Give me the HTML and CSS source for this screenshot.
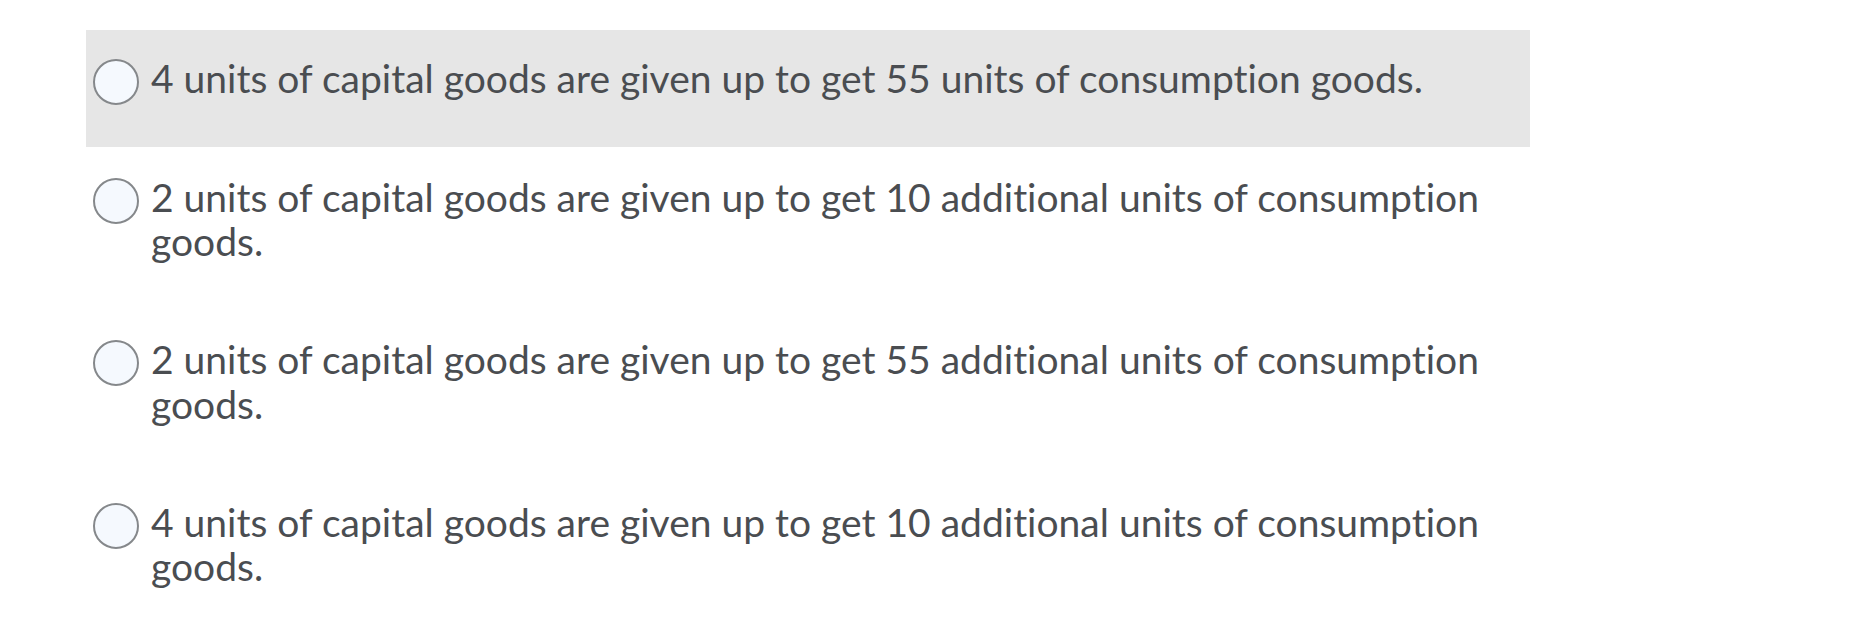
FILE: index.html
```html
<!DOCTYPE html>
<html>
<head>
<meta charset="utf-8">
<link rel="stylesheet" href="styles.css">
</head>
<body>
<div class="answers">
  <label class="answer answer-hover">
    <span class="radio"></span>
    <span class="answer-text">4 units of capital goods are given up to get 55 units of consumption goods.</span>
  </label>
  <label class="answer">
    <span class="radio"></span>
    <span class="answer-text">2 units of capital goods are given up to get 10 additional units of consumption goods.</span>
  </label>
  <label class="answer">
    <span class="radio"></span>
    <span class="answer-text">2 units of capital goods are given up to get 55 additional units of consumption goods.</span>
  </label>
  <label class="answer">
    <span class="radio"></span>
    <span class="answer-text">4 units of capital goods are given up to get 10 additional units of consumption goods.</span>
  </label>
</div>
</body>
</html>
```
FILE: styles.css
```css
html, body {
  margin: 0;
  background: #ffffff;
}
body {
  padding: 30px 0 0 86px;
  font-family: Lato, "Open Sans", sans-serif;
}
.answers {
  width: 1444px;
  display: flex;
  flex-direction: column;
  gap: 2px;
}
.answer {
  display: flex;
  align-items: flex-start;
  gap: 12px;
  padding: 26px 30px 45.5px 7px;
}
.answer-hover {
  background: #e6e6e6;
}
.radio {
  flex: 0 0 auto;
  width: 46px;
  height: 46px;
  margin-top: 3px;
  margin-bottom: -4px;
  box-sizing: border-box;
  border: 2px solid #85888b;
  border-radius: 50%;
  background: #f5f9fe;
}
.answer-text {
  font-size: 39px;
  line-height: 44.5px;
  color: #4a4d51;
  font-variant-ligatures: none;
}
```
